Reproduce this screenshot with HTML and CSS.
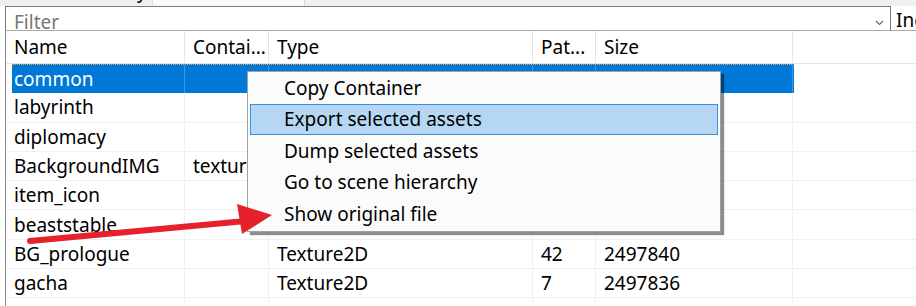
FILE: index.html
```html
<!DOCTYPE html>
<html lang="en">
<head>
  <meta charset="UTF-8">
  <title>Asset list</title>
  <link rel="stylesheet" href="styles.css">
</head>
<body>
  <div class="tabs">
    <div class="tab"><span class="tab-tail">y</span></div>
    <div class="tab active"></div>
    <div class="tab"></div>
  </div>

  <div class="toolbar">
    <div class="filter">
      <span class="filter-text">Filter</span>
      <svg class="chevron" width="9" height="6" viewBox="0 0 9 6"><path d="M1 1 L4.5 4.5 L8 1" fill="none" stroke="#666" stroke-width="1.1"/></svg>
    </div>
    <span class="side-label">Inc</span>
  </div>

  <div class="grid">
    <div class="row head">
      <div class="cell">Name</div>
      <div class="cell">Contai...</div>
      <div class="cell">Type</div>
      <div class="cell">Pat...</div>
      <div class="cell">Size</div>
      <div class="cell fill"></div>
    </div>
    <div class="row selected">
      <div class="cell">common</div>
      <div class="cell"></div>
      <div class="cell"></div>
      <div class="cell"></div>
      <div class="cell"></div>
      <div class="cell fill"></div>
    </div>
    <div class="row">
      <div class="cell">labyrinth</div>
      <div class="cell"></div><div class="cell"></div><div class="cell"></div><div class="cell"></div>
      <div class="cell fill"></div>
    </div>
    <div class="row">
      <div class="cell">diplomacy</div>
      <div class="cell"></div><div class="cell"></div><div class="cell"></div><div class="cell"></div>
      <div class="cell fill"></div>
    </div>
    <div class="row">
      <div class="cell">BackgroundIMG</div>
      <div class="cell">texture</div>
      <div class="cell"></div><div class="cell"></div><div class="cell"></div>
      <div class="cell fill"></div>
    </div>
    <div class="row">
      <div class="cell">item_icon</div>
      <div class="cell"></div><div class="cell"></div><div class="cell"></div><div class="cell"></div>
      <div class="cell fill"></div>
    </div>
    <div class="row">
      <div class="cell">beaststable</div>
      <div class="cell"></div><div class="cell"></div><div class="cell"></div><div class="cell"></div>
      <div class="cell fill"></div>
    </div>
    <div class="row">
      <div class="cell">BG_prologue</div>
      <div class="cell"></div>
      <div class="cell">Texture2D</div>
      <div class="cell">42</div>
      <div class="cell">2497840</div>
      <div class="cell fill"></div>
    </div>
    <div class="row">
      <div class="cell">gacha</div>
      <div class="cell"></div>
      <div class="cell">Texture2D</div>
      <div class="cell">7</div>
      <div class="cell">2497836</div>
      <div class="cell fill"></div>
    </div>
    <div class="row last">
      <div class="cell"></div><div class="cell"></div><div class="cell"></div><div class="cell"></div><div class="cell"></div>
      <div class="cell fill"></div>
    </div>
  </div>

  <div class="context-menu">
    <div class="menu-item">Copy Container</div>
    <div class="menu-item hover">Export selected assets</div>
    <div class="menu-item">Dump selected assets</div>
    <div class="menu-item">Go to scene hierarchy</div>
    <div class="menu-item">Show original file</div>
  </div>

  <svg class="arrow" width="250" height="50" viewBox="0 0 250 50">
    <path d="M4 45 L220 25" stroke="#e5212b" stroke-width="6" stroke-linecap="round" fill="none"/>
    <path d="M211 8 L246 19 L216 38 Z" fill="#e5212b"/>
  </svg>
</body>
</html>
```

FILE: styles.css
```css
* { box-sizing: border-box; }
body {
  margin: 0;
  width: 916px;
  height: 306px;
  overflow: hidden;
  position: relative;
  background: #fff;
  font-family: 'Noto Sans', 'Open Sans', sans-serif;
  font-size: 19px;
  color: #000;
}
.tabs {
  display: flex;
  height: 6px;
  background: #f0f0f0;
}
.tab {
  width: 152px;
  height: 6px;
  position: relative;
  overflow: hidden;
}
.tab.active {
  width: 153px;
  background: #fafafa;
  border-left: 1px solid #dcdcdc;
  border-right: 1px solid #dcdcdc;
}
.tab-tail {
  position: absolute;
  left: 137px;
  top: -22px;
  font-size: 19px;
  line-height: 26px;
}
.toolbar {
  display: flex;
  height: 24px;
}
.filter {
  flex: none;
  margin-left: 5px;
  width: 886px;
  height: 25px;
  border: 1px solid #7a7a7a;
  border-bottom-color: #a8a8a8;
  background: #fff;
  overflow: hidden;
  display: flex;
  align-items: flex-start;
  justify-content: space-between;
  padding: 0 5px 0 8px;
}
.filter-text {
  color: #777;
  font-size: 19px;
  line-height: 26px;
  margin-top: 2px;
}
.chevron {
  margin-top: 13px;
  margin-right: 1px;
}
.side-label {
  flex: none;
  margin-left: 5px;
  line-height: 28px;
  height: 24px;
  overflow: hidden;
  align-self: flex-start;
}
.grid {
  margin-left: 5px;
  border-left: 1px solid #8a8a8a;
}
.row {
  display: grid;
  grid-template-columns: 179px 84px 264px 63px 197px 1fr;
  height: 29.3px;
  border-bottom: 1px solid #f0f0f0;
  align-items: center;
}
.row.head {
  height: 34px;
  border-bottom: 1px solid #e5e5e5;
  border-top: 1px solid #a8a8a8;
}
.row.last {
  height: 12px;
  border-bottom: none;
}
.cell {
  height: 100%;
  display: flex;
  align-items: center;
  padding-left: 8px;
  border-right: 1px solid #f0f0f0;
  white-space: nowrap;
  overflow: hidden;
}
.row.head .cell { border-right-color: #e5e5e5; }
.cell.fill { border-right: none; }
.row.selected {
  margin-left: 6px;
  width: 782px;
  grid-template-columns: 173px 84px 264px 63px 197px;
  background: #0078d7;
  color: #fff;
  border-top: 1px dotted #f0a040;
  border-bottom: none;
}
.row.selected .cell {
  padding-left: 2px;
  border-right: 1px solid #3d96e0;
}
.row.selected .cell.fill { display: none; }

.context-menu {
  position: absolute;
  left: 247px;
  top: 71px;
  width: 474px;
  height: 161px;
  background: #fbfbfb;
  border: 1px solid #a0a0a0;
  box-shadow: 3px 3px 1px rgba(0, 0, 0, 0.45);
  padding: 0 2px 2px;
  display: flex;
  flex-direction: column;
}
.menu-item {
  height: 31.5px;
  flex: none;
  display: flex;
  align-items: center;
  padding-left: 33px;
  border: 1px solid transparent;
}
.menu-item.hover {
  background: #b5d7f3;
  border-color: #3d8ed8;
}
.arrow {
  position: absolute;
  left: 26px;
  top: 196px;
}
```
